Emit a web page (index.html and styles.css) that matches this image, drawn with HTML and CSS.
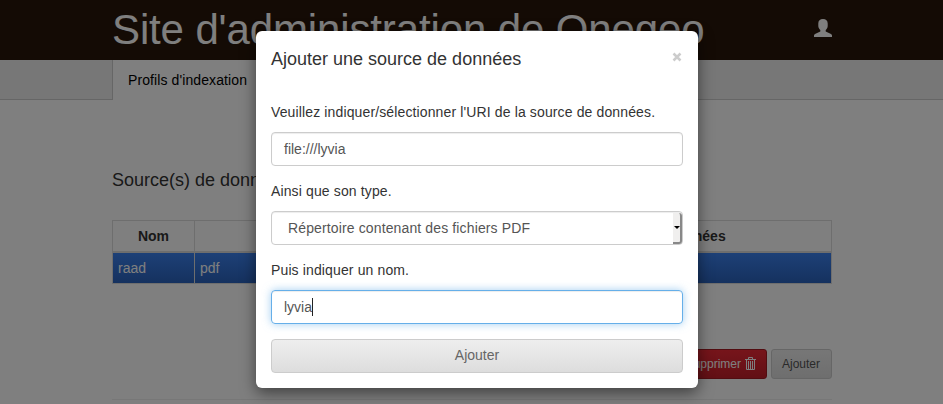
FILE: index.html
```html
<!DOCTYPE html>
<html lang="fr">
<head>
<meta charset="utf-8">
<title>Site d'administration de Onegeo</title>
<link rel="stylesheet" href="styles.css">
</head>
<body>
<header class="banner">
  <div class="container banner-inner">
    <h1 class="site-title">Site d'administration de Onegeo</h1>
    <svg class="user-icon" viewBox="0 0 18 18"><path d="M9 0C6 0 4.300 1.700 4.300 4.500V7C4.300 8.800 5.300 10.200 6.300 11V12.500L1 15Q0 15.600 0 16.500V18H18V16.500Q18 15.600 17 15L11.700 12.500V11C12.700 10.200 13.700 8.800 13.700 7V4.500C13.700 1.700 12 0 9 0Z"/></svg>
  </div>
</header>
<nav class="tabs"><div class="container"><a class="tab">Profils d'indexation</a></div></nav>
<main class="container content">
  <h2 class="section-title">Source(s) de données</h2>
  <table class="sources">
    <colgroup><col class="col-name"><col class="col-type"><col></colgroup>
    <thead><tr><th>Nom</th><th></th><th>URI de la source de données</th></tr></thead>
    <tbody><tr><td>raad</td><td>pdf</td><td></td></tr></tbody>
  </table>
  <div class="actions">
    <button class="btn btn-danger"><span>Supprimer</span>
      <svg class="trash-icon" viewBox="0 0 11 13"><path d="M3.500 2V.5H7.500V2M0 2.500H11M1.500 3V12.500H9.500V3M3.500 4V12M5.500 4V12M7.500 4V12"/></svg>
    </button>
    <button class="btn btn-default"><span>Ajouter</span></button>
  </div>
  <hr class="rule">
</main>
<div class="backdrop"></div>
<section class="modal" role="dialog">
  <div class="modal-header"><h3 class="modal-title">Ajouter une source de données</h3>
    <svg class="close" viewBox="0 0 10 10"><path d="M1.500 1.500L8.500 8.500M8.500 1.500L1.500 8.500"/></svg>
  </div>
  <div class="modal-body">
    <p class="label"><span>Veuillez indiquer/sélectionner l'URI de la source de données.</span></p>
    <div class="field"><span>file:///lyvia</span></div>
    <p class="label"><span>Ainsi que son type.</span></p>
    <div class="field select"><span>Répertoire contenant des fichiers PDF</span><i class="arrow"></i></div>
    <p class="label"><span>Puis indiquer un nom.</span></p>
    <div class="field focused"><span>lyvia</span><i class="caret"></i></div>
    <button class="submit"><span>Ajouter</span></button>
  </div>
</section>
</body>
</html>
```
FILE: styles.css
```css
* { box-sizing: border-box; }
body { margin: 0; height: 404px; overflow: hidden; background: #fff; color: #333; font: 14px/20px "Liberation Sans", sans-serif; position: relative; white-space: nowrap; }
h1, h2, h3, p { margin: 0; font-weight: 400; }
.container { width: 720px; margin-left: 112px; }
.banner { height: 60px; background: #28160a; }
.banner-inner { display: flex; justify-content: space-between; }
.site-title { font-size: 42px; line-height: 60px; letter-spacing: -.13px; color: #fff; }
.user-icon { width: 18px; height: 18px; margin-top: 19px; fill: #fff; }
.tabs { height: 40px; background: linear-gradient(#ccc, #ccc) bottom / 100% 1px no-repeat #eee; }
.tab { display: block; width: 168px; height: 40px; padding: 10px 15px; background: #fff; border-left: 1px solid #ccc; color: #000; letter-spacing: .1px; }
.content { padding-top: 70px; }
.section-title { font-size: 18px; line-height: 20px; }
.sources { width: 720px; margin-top: 30px; border-collapse: collapse; table-layout: fixed; }
.col-name { width: 82px; }
.col-type { width: 234px; }
.sources th, .sources td { border: 1px solid #ddd; padding: 5px; line-height: 20px; height: 31px; }
.sources th { border-bottom-width: 2px; }
.sources tbody tr { background: linear-gradient(#3c82f0, #2a62bc); color: #fff; }
.actions { display: flex; justify-content: flex-end; gap: 4px; margin-top: 65px; }
.btn { height: 30px; padding: 0 10px; border: 1px solid; border-radius: 3px; font: 12px/18px "Liberation Sans", sans-serif; display: flex; align-items: center; gap: 4px; }
.btn-danger { background: linear-gradient(#ed2a36, #c4202a); border-color: #a41a22; color: #fff; }
.btn-default { width: 61px; background: linear-gradient(#eee, #ddd); border-color: #ccc; color: #555; }
.trash-icon { width: 11px; height: 13px; margin-top: -2px; fill: none; stroke: #fff; }
.rule { margin: 20px 0 0; border: 0; border-top: 1px solid #eee; }
.backdrop { position: absolute; inset: 0; background: rgba(0, 0, 0, .5); }
.modal { position: absolute; left: 256px; top: 31px; width: 442px; height: 357px; padding: 15px; background: #fff; border-radius: 6px; box-shadow: 0 5px 15px rgba(0, 0, 0, .5); }
.modal-header { display: flex; justify-content: space-between; height: 55px; }
.modal-title { font-size: 18px; line-height: 25px; padding-top: 1px; }
.close { width: 10px; height: 10px; margin-top: 6px; margin-right: 1px; stroke: #ccc; stroke-width: 2.500; }
.label { height: 31px; padding-top: 1px; letter-spacing: .13px; }
.field { height: 34px; padding: 6px 12px; margin-bottom: 14px; border: 1px solid #ccc; border-radius: 4px; box-shadow: inset 0 1px 1px rgba(0, 0, 0, .075); color: #555; display: flex; }
.select { padding: 0 0 0 16px; align-items: center; justify-content: space-between; letter-spacing: .13px; }
.arrow { width: 9px; height: 31px; background: #f0efee; border-right: 2px solid #888; border-bottom: 2px solid #888; border-radius: 0 3px 3px 0; display: flex; align-items: center; justify-content: center; }
.arrow::before { content: ""; border: 3px solid transparent; border-top-color: #000; border-bottom: 0; }
.focused { margin-bottom: 15px; border-color: #66afe9; box-shadow: inset 0 1px 1px rgba(0, 0, 0, .075), 0 0 8px rgba(102, 175, 233, .6); }
.caret { width: 1px; height: 18px; margin-top: 1px; background: #222; }
.submit { display: block; width: 100%; height: 34px; padding: 0 0 2px; border: 1px solid #ccc; border-radius: 4px; background: linear-gradient(#eee, #ddd); color: #666; font: 14px/20px "Liberation Sans", sans-serif; }
```
